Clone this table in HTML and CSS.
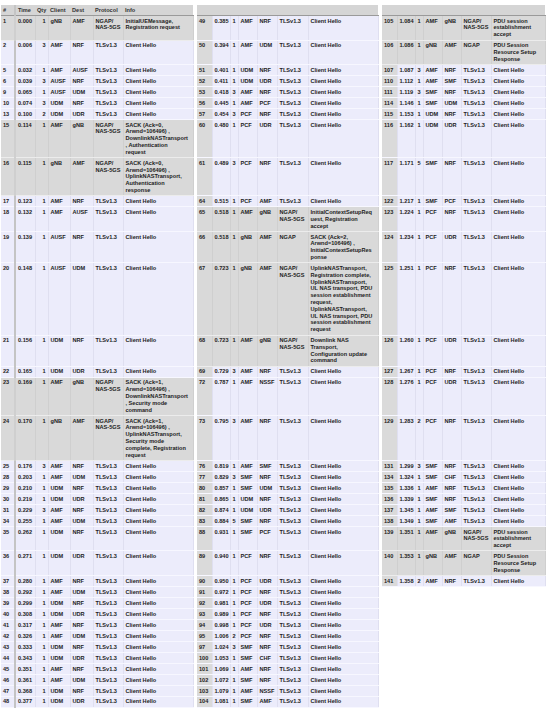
FILE: index.html
```html
<!DOCTYPE html>
<html>
<head>
<meta charset="utf-8">
<link rel="stylesheet" href="styles.css">
</head>
<body>
<div class="sheet">
<table class="trace">
<colgroup>
<col class="w14"><col class="w20"><col class="w13"><col class="w22"><col class="w23"><col class="w30"><col class="w70">
<col class="w4">
<col class="w15"><col class="w18"><col class="w8"><col class="w19"><col class="w20"><col class="w31"><col class="w70">
<col class="w4">
<col class="w15"><col class="w18"><col class="w8"><col class="w19"><col class="w19"><col class="w30"><col class="w54">
</colgroup>
<thead>
<tr class="h"><th>#</th><th>Time</th><th>Qty</th><th>Client</th><th>Dest</th><th>Protocol</th><th>Info</th><th class="sp"></th><th></th><th></th><th></th><th></th><th></th><th></th><th></th><th class="sp"></th><th></th><th></th><th></th><th></th><th></th><th></th><th></th></tr>
</thead>
<tbody>
<tr class="g1 g3"><td>1</td><td>0.000</td><td class="q">1</td><td>gNB</td><td>AMF</td><td>NGAP/<br>NAS-5GS</td><td>InitialUEMessage,<br>Registration request</td><td class="sp"></td><td>49</td><td>0.385</td><td class="q">1</td><td>AMF</td><td>NRF</td><td>TLSv1.3</td><td>Client Hello</td><td class="sp"></td><td>105</td><td>1.084</td><td class="q">1</td><td>AMF</td><td>gNB</td><td>NGAP/<br>NAS-5GS</td><td>PDU session<br>establishment<br>accept</td></tr>
<tr class="g3"><td>2</td><td>0.006</td><td class="q">3</td><td>AMF</td><td>NRF</td><td>TLSv1.3</td><td>Client Hello</td><td class="sp"></td><td>50</td><td>0.394</td><td class="q">1</td><td>AMF</td><td>UDM</td><td>TLSv1.3</td><td>Client Hello</td><td class="sp"></td><td>106</td><td>1.086</td><td class="q">1</td><td>gNB</td><td>AMF</td><td>NGAP</td><td>PDU Session<br>Resource Setup<br>Response</td></tr>
<tr><td>5</td><td>0.032</td><td class="q">1</td><td>AMF</td><td>AUSF</td><td>TLSv1.3</td><td>Client Hello</td><td class="sp"></td><td>51</td><td>0.401</td><td class="q">1</td><td>UDM</td><td>NRF</td><td>TLSv1.3</td><td>Client Hello</td><td class="sp"></td><td>107</td><td>1.087</td><td class="q">3</td><td>AMF</td><td>NRF</td><td>TLSv1.3</td><td>Client Hello</td></tr>
<tr><td>6</td><td>0.039</td><td class="q">3</td><td>AUSF</td><td>NRF</td><td>TLSv1.3</td><td>Client Hello</td><td class="sp"></td><td>52</td><td>0.411</td><td class="q">1</td><td>UDM</td><td>UDR</td><td>TLSv1.3</td><td>Client Hello</td><td class="sp"></td><td>110</td><td>1.112</td><td class="q">1</td><td>AMF</td><td>SMF</td><td>TLSv1.3</td><td>Client Hello</td></tr>
<tr><td>9</td><td>0.065</td><td class="q">1</td><td>AUSF</td><td>UDM</td><td>TLSv1.3</td><td>Client Hello</td><td class="sp"></td><td>53</td><td>0.418</td><td class="q">3</td><td>AMF</td><td>NRF</td><td>TLSv1.3</td><td>Client Hello</td><td class="sp"></td><td>111</td><td>1.119</td><td class="q">3</td><td>SMF</td><td>NRF</td><td>TLSv1.3</td><td>Client Hello</td></tr>
<tr><td>10</td><td>0.074</td><td class="q">3</td><td>UDM</td><td>NRF</td><td>TLSv1.3</td><td>Client Hello</td><td class="sp"></td><td>56</td><td>0.445</td><td class="q">1</td><td>AMF</td><td>PCF</td><td>TLSv1.3</td><td>Client Hello</td><td class="sp"></td><td>114</td><td>1.146</td><td class="q">1</td><td>SMF</td><td>UDM</td><td>TLSv1.3</td><td>Client Hello</td></tr>
<tr><td>13</td><td>0.100</td><td class="q">2</td><td>UDM</td><td>UDR</td><td>TLSv1.3</td><td>Client Hello</td><td class="sp"></td><td>57</td><td>0.454</td><td class="q">3</td><td>PCF</td><td>NRF</td><td>TLSv1.3</td><td>Client Hello</td><td class="sp"></td><td>115</td><td>1.153</td><td class="q">1</td><td>UDM</td><td>NRF</td><td>TLSv1.3</td><td>Client Hello</td></tr>
<tr class="g1"><td>15</td><td>0.114</td><td class="q">1</td><td>AMF</td><td>gNB</td><td>NGAP/<br>NAS-5GS</td><td>SACK (Ack=0,<br>Arwnd=106496) ,<br>DownlinkNASTransport<br>, Authentication<br>request</td><td class="sp"></td><td>60</td><td>0.480</td><td class="q">1</td><td>PCF</td><td>UDR</td><td>TLSv1.3</td><td>Client Hello</td><td class="sp"></td><td>116</td><td>1.162</td><td class="q">1</td><td>UDM</td><td>UDR</td><td>TLSv1.3</td><td>Client Hello</td></tr>
<tr class="g1"><td>16</td><td>0.115</td><td class="q">1</td><td>gNB</td><td>AMF</td><td>NGAP/<br>NAS-5GS</td><td>SACK (Ack=0,<br>Arwnd=106496) ,<br>UplinkNASTransport,<br>Authentication<br>response</td><td class="sp"></td><td>61</td><td>0.489</td><td class="q">3</td><td>PCF</td><td>NRF</td><td>TLSv1.3</td><td>Client Hello</td><td class="sp"></td><td>117</td><td>1.171</td><td class="q">5</td><td>SMF</td><td>NRF</td><td>TLSv1.3</td><td>Client Hello</td></tr>
<tr><td>17</td><td>0.123</td><td class="q">1</td><td>AMF</td><td>NRF</td><td>TLSv1.3</td><td>Client Hello</td><td class="sp"></td><td>64</td><td>0.515</td><td class="q">1</td><td>PCF</td><td>AMF</td><td>TLSv1.3</td><td>Client Hello</td><td class="sp"></td><td>122</td><td>1.217</td><td class="q">1</td><td>SMF</td><td>PCF</td><td>TLSv1.3</td><td>Client Hello</td></tr>
<tr class="g2"><td>18</td><td>0.132</td><td class="q">1</td><td>AMF</td><td>AUSF</td><td>TLSv1.3</td><td>Client Hello</td><td class="sp"></td><td>65</td><td>0.518</td><td class="q">1</td><td>AMF</td><td>gNB</td><td>NGAP/<br>NAS-5GS</td><td>InitialContextSetupReq<br>uest, Registration<br>accept</td><td class="sp"></td><td>123</td><td>1.224</td><td class="q">1</td><td>PCF</td><td>NRF</td><td>TLSv1.3</td><td>Client Hello</td></tr>
<tr class="g2"><td>19</td><td>0.139</td><td class="q">1</td><td>AUSF</td><td>NRF</td><td>TLSv1.3</td><td>Client Hello</td><td class="sp"></td><td>66</td><td>0.518</td><td class="q">1</td><td>gNB</td><td>AMF</td><td>NGAP</td><td>SACK (Ack=2,<br>Arwnd=106496) ,<br>InitialContextSetupRes<br>ponse</td><td class="sp"></td><td>124</td><td>1.234</td><td class="q">1</td><td>PCF</td><td>UDR</td><td>TLSv1.3</td><td>Client Hello</td></tr>
<tr class="g2"><td>20</td><td>0.148</td><td class="q">1</td><td>AUSF</td><td>UDM</td><td>TLSv1.3</td><td>Client Hello</td><td class="sp"></td><td>67</td><td>0.723</td><td class="q">1</td><td>gNB</td><td>AMF</td><td>NGAP/<br>NAS-5GS</td><td>UplinkNASTransport,<br>Registration complete,<br>UplinkNASTransport,<br>UL NAS transport, PDU<br>session establishment<br>request,<br>UplinkNASTransport,<br>UL NAS transport, PDU<br>session establishment<br>request</td><td class="sp"></td><td>125</td><td>1.251</td><td class="q">1</td><td>PCF</td><td>NRF</td><td>TLSv1.3</td><td>Client Hello</td></tr>
<tr class="g2"><td>21</td><td>0.156</td><td class="q">1</td><td>UDM</td><td>NRF</td><td>TLSv1.3</td><td>Client Hello</td><td class="sp"></td><td>68</td><td>0.723</td><td class="q">1</td><td>AMF</td><td>gNB</td><td>NGAP/<br>NAS-5GS</td><td>Downlink NAS<br>Transport,<br>Configuration update<br>command</td><td class="sp"></td><td>126</td><td>1.260</td><td class="q">1</td><td>PCF</td><td>UDR</td><td>TLSv1.3</td><td>Client Hello</td></tr>
<tr><td>22</td><td>0.165</td><td class="q">1</td><td>UDM</td><td>UDR</td><td>TLSv1.3</td><td>Client Hello</td><td class="sp"></td><td>69</td><td>0.729</td><td class="q">3</td><td>AMF</td><td>NRF</td><td>TLSv1.3</td><td>Client Hello</td><td class="sp"></td><td>127</td><td>1.267</td><td class="q">1</td><td>PCF</td><td>NRF</td><td>TLSv1.3</td><td>Client Hello</td></tr>
<tr class="g1"><td>23</td><td>0.169</td><td class="q">1</td><td>AMF</td><td>gNB</td><td>NGAP/<br>NAS-5GS</td><td>SACK (Ack=1,<br>Arwnd=106496) ,<br>DownlinkNASTransport<br>, Security mode<br>command</td><td class="sp"></td><td>72</td><td>0.787</td><td class="q">1</td><td>AMF</td><td>NSSF</td><td>TLSv1.3</td><td>Client Hello</td><td class="sp"></td><td>128</td><td>1.276</td><td class="q">1</td><td>PCF</td><td>UDR</td><td>TLSv1.3</td><td>Client Hello</td></tr>
<tr class="g1"><td>24</td><td>0.170</td><td class="q">1</td><td>gNB</td><td>AMF</td><td>NGAP/<br>NAS-5GS</td><td>SACK (Ack=1,<br>Arwnd=106496) ,<br>UplinkNASTransport,<br>Security mode<br>complete, Registration<br>request</td><td class="sp"></td><td>73</td><td>0.795</td><td class="q">3</td><td>AMF</td><td>NRF</td><td>TLSv1.3</td><td>Client Hello</td><td class="sp"></td><td>129</td><td>1.283</td><td class="q">2</td><td>PCF</td><td>NRF</td><td>TLSv1.3</td><td>Client Hello</td></tr>
<tr><td>25</td><td>0.176</td><td class="q">3</td><td>AMF</td><td>NRF</td><td>TLSv1.3</td><td>Client Hello</td><td class="sp"></td><td>76</td><td>0.819</td><td class="q">1</td><td>AMF</td><td>SMF</td><td>TLSv1.3</td><td>Client Hello</td><td class="sp"></td><td>131</td><td>1.299</td><td class="q">3</td><td>SMF</td><td>NRF</td><td>TLSv1.3</td><td>Client Hello</td></tr>
<tr><td>28</td><td>0.203</td><td class="q">1</td><td>AMF</td><td>UDM</td><td>TLSv1.3</td><td>Client Hello</td><td class="sp"></td><td>77</td><td>0.829</td><td class="q">3</td><td>SMF</td><td>NRF</td><td>TLSv1.3</td><td>Client Hello</td><td class="sp"></td><td>134</td><td>1.324</td><td class="q">1</td><td>SMF</td><td>CHF</td><td>TLSv1.3</td><td>Client Hello</td></tr>
<tr><td>29</td><td>0.210</td><td class="q">1</td><td>UDM</td><td>NRF</td><td>TLSv1.3</td><td>Client Hello</td><td class="sp"></td><td>80</td><td>0.857</td><td class="q">1</td><td>SMF</td><td>UDM</td><td>TLSv1.3</td><td>Client Hello</td><td class="sp"></td><td>135</td><td>1.336</td><td class="q">1</td><td>AMF</td><td>NRF</td><td>TLSv1.3</td><td>Client Hello</td></tr>
<tr><td>30</td><td>0.219</td><td class="q">1</td><td>UDM</td><td>UDR</td><td>TLSv1.3</td><td>Client Hello</td><td class="sp"></td><td>81</td><td>0.865</td><td class="q">1</td><td>UDM</td><td>NRF</td><td>TLSv1.3</td><td>Client Hello</td><td class="sp"></td><td>136</td><td>1.339</td><td class="q">1</td><td>SMF</td><td>NRF</td><td>TLSv1.3</td><td>Client Hello</td></tr>
<tr><td>31</td><td>0.229</td><td class="q">3</td><td>AMF</td><td>NRF</td><td>TLSv1.3</td><td>Client Hello</td><td class="sp"></td><td>82</td><td>0.874</td><td class="q">1</td><td>UDM</td><td>UDR</td><td>TLSv1.3</td><td>Client Hello</td><td class="sp"></td><td>137</td><td>1.345</td><td class="q">1</td><td>AMF</td><td>SMF</td><td>TLSv1.3</td><td>Client Hello</td></tr>
<tr><td>34</td><td>0.255</td><td class="q">1</td><td>AMF</td><td>UDM</td><td>TLSv1.3</td><td>Client Hello</td><td class="sp"></td><td>83</td><td>0.884</td><td class="q">5</td><td>SMF</td><td>NRF</td><td>TLSv1.3</td><td>Client Hello</td><td class="sp"></td><td>138</td><td>1.349</td><td class="q">1</td><td>SMF</td><td>AMF</td><td>TLSv1.3</td><td>Client Hello</td></tr>
<tr class="g3"><td>35</td><td>0.262</td><td class="q">1</td><td>UDM</td><td>NRF</td><td>TLSv1.3</td><td>Client Hello</td><td class="sp"></td><td>88</td><td>0.931</td><td class="q">1</td><td>SMF</td><td>PCF</td><td>TLSv1.3</td><td>Client Hello</td><td class="sp"></td><td>139</td><td>1.351</td><td class="q">1</td><td>AMF</td><td>gNB</td><td>NGAP/<br>NAS-5GS</td><td>PDU session<br>establishment<br>accept</td></tr>
<tr class="g3"><td>36</td><td>0.271</td><td class="q">1</td><td>UDM</td><td>UDR</td><td>TLSv1.3</td><td>Client Hello</td><td class="sp"></td><td>89</td><td>0.940</td><td class="q">1</td><td>PCF</td><td>NRF</td><td>TLSv1.3</td><td>Client Hello</td><td class="sp"></td><td>140</td><td>1.353</td><td class="q">1</td><td>gNB</td><td>AMF</td><td>NGAP</td><td>PDU Session<br>Resource Setup<br>Response</td></tr>
<tr><td>37</td><td>0.280</td><td class="q">1</td><td>AMF</td><td>NRF</td><td>TLSv1.3</td><td>Client Hello</td><td class="sp"></td><td>90</td><td>0.950</td><td class="q">1</td><td>PCF</td><td>UDR</td><td>TLSv1.3</td><td>Client Hello</td><td class="sp"></td><td>141</td><td>1.358</td><td class="q">2</td><td>AMF</td><td>NRF</td><td>TLSv1.3</td><td>Client Hello</td></tr>
<tr class="e3"><td>38</td><td>0.292</td><td class="q">1</td><td>AMF</td><td>UDM</td><td>TLSv1.3</td><td>Client Hello</td><td class="sp"></td><td>91</td><td>0.972</td><td class="q">1</td><td>PCF</td><td>NRF</td><td>TLSv1.3</td><td>Client Hello</td><td class="sp"></td><td></td><td></td><td></td><td></td><td></td><td></td><td></td></tr>
<tr class="e3"><td>39</td><td>0.299</td><td class="q">1</td><td>UDM</td><td>NRF</td><td>TLSv1.3</td><td>Client Hello</td><td class="sp"></td><td>92</td><td>0.981</td><td class="q">1</td><td>PCF</td><td>UDR</td><td>TLSv1.3</td><td>Client Hello</td><td class="sp"></td><td></td><td></td><td></td><td></td><td></td><td></td><td></td></tr>
<tr class="e3"><td>40</td><td>0.308</td><td class="q">1</td><td>UDM</td><td>UDR</td><td>TLSv1.3</td><td>Client Hello</td><td class="sp"></td><td>93</td><td>0.989</td><td class="q">1</td><td>PCF</td><td>NRF</td><td>TLSv1.3</td><td>Client Hello</td><td class="sp"></td><td></td><td></td><td></td><td></td><td></td><td></td><td></td></tr>
<tr class="e3"><td>41</td><td>0.317</td><td class="q">1</td><td>AMF</td><td>NRF</td><td>TLSv1.3</td><td>Client Hello</td><td class="sp"></td><td>94</td><td>0.998</td><td class="q">1</td><td>PCF</td><td>UDR</td><td>TLSv1.3</td><td>Client Hello</td><td class="sp"></td><td></td><td></td><td></td><td></td><td></td><td></td><td></td></tr>
<tr class="e3"><td>42</td><td>0.326</td><td class="q">1</td><td>AMF</td><td>UDM</td><td>TLSv1.3</td><td>Client Hello</td><td class="sp"></td><td>95</td><td>1.006</td><td class="q">2</td><td>PCF</td><td>NRF</td><td>TLSv1.3</td><td>Client Hello</td><td class="sp"></td><td></td><td></td><td></td><td></td><td></td><td></td><td></td></tr>
<tr class="e3"><td>43</td><td>0.333</td><td class="q">1</td><td>UDM</td><td>NRF</td><td>TLSv1.3</td><td>Client Hello</td><td class="sp"></td><td>97</td><td>1.024</td><td class="q">3</td><td>SMF</td><td>NRF</td><td>TLSv1.3</td><td>Client Hello</td><td class="sp"></td><td></td><td></td><td></td><td></td><td></td><td></td><td></td></tr>
<tr class="e3"><td>44</td><td>0.343</td><td class="q">1</td><td>UDM</td><td>UDR</td><td>TLSv1.3</td><td>Client Hello</td><td class="sp"></td><td>100</td><td>1.053</td><td class="q">1</td><td>SMF</td><td>CHF</td><td>TLSv1.3</td><td>Client Hello</td><td class="sp"></td><td></td><td></td><td></td><td></td><td></td><td></td><td></td></tr>
<tr class="e3"><td>45</td><td>0.351</td><td class="q">1</td><td>AMF</td><td>NRF</td><td>TLSv1.3</td><td>Client Hello</td><td class="sp"></td><td>101</td><td>1.069</td><td class="q">1</td><td>AMF</td><td>NRF</td><td>TLSv1.3</td><td>Client Hello</td><td class="sp"></td><td></td><td></td><td></td><td></td><td></td><td></td><td></td></tr>
<tr class="e3"><td>46</td><td>0.361</td><td class="q">1</td><td>AMF</td><td>UDM</td><td>TLSv1.3</td><td>Client Hello</td><td class="sp"></td><td>102</td><td>1.072</td><td class="q">1</td><td>SMF</td><td>NRF</td><td>TLSv1.3</td><td>Client Hello</td><td class="sp"></td><td></td><td></td><td></td><td></td><td></td><td></td><td></td></tr>
<tr class="e3"><td>47</td><td>0.368</td><td class="q">1</td><td>UDM</td><td>NRF</td><td>TLSv1.3</td><td>Client Hello</td><td class="sp"></td><td>103</td><td>1.079</td><td class="q">1</td><td>AMF</td><td>NSSF</td><td>TLSv1.3</td><td>Client Hello</td><td class="sp"></td><td></td><td></td><td></td><td></td><td></td><td></td><td></td></tr>
<tr class="e3"><td>48</td><td>0.377</td><td class="q">1</td><td>UDM</td><td>UDR</td><td>TLSv1.3</td><td>Client Hello</td><td class="sp"></td><td>104</td><td>1.081</td><td class="q">1</td><td>SMF</td><td>AMF</td><td>TLSv1.3</td><td>Client Hello</td><td class="sp"></td><td></td><td></td><td></td><td></td><td></td><td></td><td></td></tr>
</tbody>
</table>
</div>
</body>
</html>
```
FILE: styles.css
```css
html, body {
  margin: 0;
  padding: 0;
  background: #ffffff;
}

.sheet {
  padding: 5px 5px 0 1px;
}

.trace {
  border-collapse: collapse;
  table-layout: fixed;
  width: 544px;
  font-family: "Liberation Sans", Arial, sans-serif;
  font-weight: bold;
  font-size: 5.6px;
  line-height: 6.8px;
  color: #222222;
}

.w4 { width: 4px; }
.w8 { width: 8px; }
.w13 { width: 13px; }
.w14 { width: 14px; }
.w15 { width: 15px; }
.w18 { width: 18px; }
.w19 { width: 19px; }
.w20 { width: 20px; }
.w22 { width: 22px; }
.w23 { width: 23px; }
.w30 { width: 30px; }
.w31 { width: 31px; }
.w54 { width: 54px; }
.w70 { width: 70px; }

.trace th,
.trace td {
  padding: 1.6px 2px;
  vertical-align: top;
  text-align: left;
  white-space: nowrap;
  overflow: visible;
  background: #ececfb;
  border-bottom: 1px solid #f7f7ff;
  border-right: 1px solid #dfdff0;
}

.trace .q {
  text-align: right;
}

.trace tr.h th {
  background: #d5d5d5;
  border-bottom: 1px solid #9a9a9a;
  border-right: none;
  color: #333333;
}

.trace tr.h th:first-child,
.trace td:first-child {
  border-right: 2px solid #c4c4c4;
}

.trace td:nth-child(9),
.trace td:nth-child(17) {
  background: #dadada;
}

.trace tr.g1 td:nth-child(-n+7),
.trace tr.g2 td:nth-child(n+9):nth-child(-n+15),
.trace tr.g3 td:nth-child(n+17) {
  background: #d9d9d9;
  border-bottom-color: #ececec;
  border-right-color: #cfcfcf;
}

.trace tr.e3 td:nth-child(n+17) {
  background: #ffffff;
  border-color: #ffffff;
}

.trace .sp,
.trace tr.h .sp {
  background: #ffffff;
  border: none;
  padding: 0;
}
```
